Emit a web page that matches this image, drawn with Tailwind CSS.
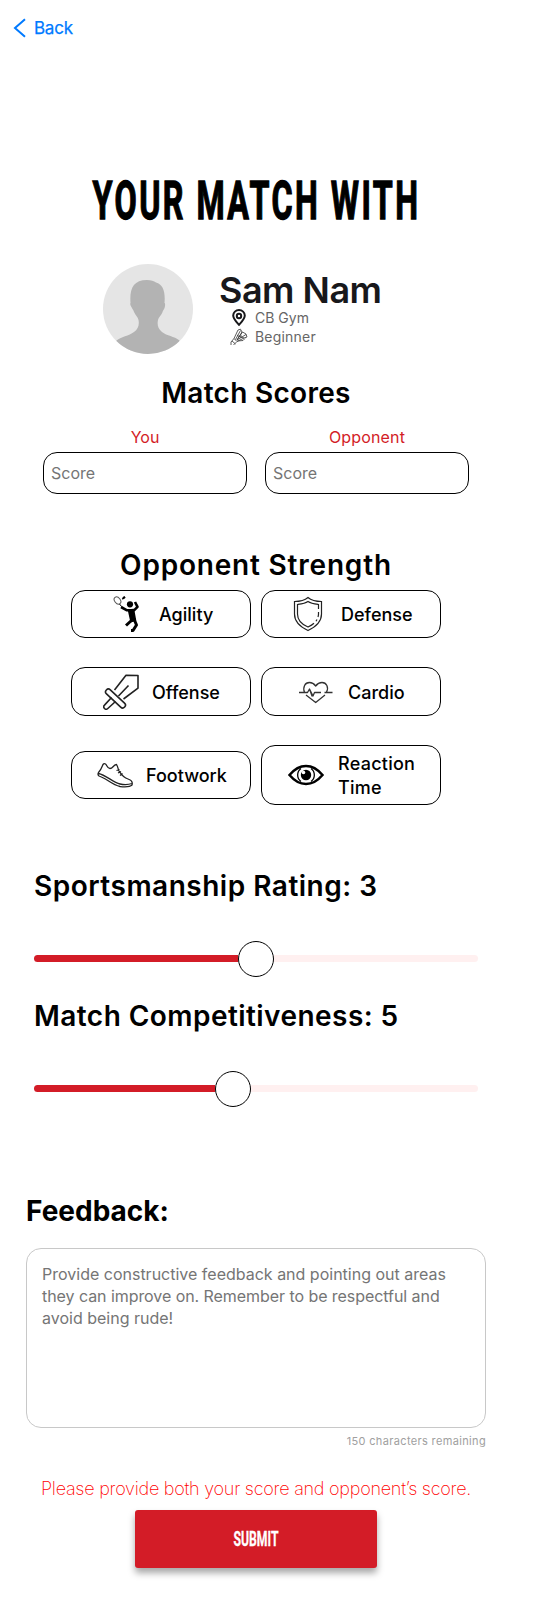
<!DOCTYPE html>
<html lang="en">
<head>
<meta charset="utf-8">
<title>Your Match</title>
<script src="https://cdn.jsdelivr.net/npm/@tailwindcss/browser@4"></script>
</head>
<body class="bg-white text-black font-['Inter',sans-serif]">
<main class="w-[542px] h-[1616px] overflow-hidden">
  <nav class="h-[56px] pl-[13px] flex items-center gap-[8px] text-[#007aff]">
    <svg class="w-[13px] h-[20px]" viewBox="0 0 13 20" fill="none" stroke="currentColor" stroke-width="2"><path d="M12 1.3 2 10l10 8.7"/></svg>
    <span class="text-[17px] leading-[20px] tracking-[-0.25px] [-webkit-text-stroke:0.25px_#007aff]">Back</span>
  </nav>
  <div class="w-[512px] flex flex-col">
    <h1 class="mt-[109px] h-[76px]" aria-label="Your match with">
      <svg class="w-[512px] h-[76px]" viewBox="0 0 512 76"><text x="92.500" y="54" textLength="328" lengthAdjust="spacingAndGlyphs" font-family="Roboto" font-weight="700" font-size="53" letter-spacing="4" stroke="#000" stroke-width="1.300">YOUR MATCH WITH</text></svg>
    </h1>
    <section class="mt-[23px] ml-[103px] h-[90px] flex">
      <svg class="w-[90px] h-[90px] rounded-full bg-[#e5e5e5]" viewBox="0 0 90 90" fill="#b3b3b3"><path d="M27.500 39C26.500 25 30 16 44 16c4 0 7 1 9 2.500 7 2 9.500 9 8.500 20.500 1 0 .7 4-.4 6-1 1.500-1.300 2-1.500 3-1.200 3.500-4.100 5-4.600 8-1 5 0 9 4 12 5 4 12 4 17.500 8.500V95H13V77c5-4.500 13-5 18-9 4-3 5.500-7 4.500-12-.5-3-3-4.500-4.500-8-.3-1-.7-2-1.500-3-1.300-2-3-5-2-6Z"/></svg>
      <div class="ml-[26px] pt-[4px] flex flex-col">
        <h2 class="text-[36px] leading-[44px] font-semibold tracking-[-0.5px] text-[#18181b]">Sam Nam</h2>
        <div class="flex h-[19px] items-center text-[#666] mt-[-4px]">
          <svg class="w-[14px] h-[17px] ml-[13px]" viewBox="0 0 14 17" fill="none" stroke="#18181b" stroke-width="2"><path d="M7 15.800C4 12.500 1.200 9.800 1.200 6.500a5.800 5.500 0 0 1 11.600 0C12.800 9.800 10 12.500 7 15.800Z"/><circle cx="7" cy="7" r="2.200"/></svg>
          <span class="ml-[9px] text-[14px] leading-[19px]">CB Gym</span>
        </div>
        <div class="flex h-[19px] items-center text-[#666]">
          <svg class="w-[18px] h-[18px] ml-[11px]" viewBox="0 0 18 18" fill="none" stroke="#333" stroke-width=".8"><path d="M1 17v-3l3-3.500 3 3L3.500 17M4 10.500 8 2l2.500-.8L12 4l-5 8M5.500 11.500l5-9M7 13.500l7-3.500 3-1-1-3-3.500-2L7 12l9-5.500M10 9l4 1M7 7l2 1.500 3-.5M7.500 13 13 12.500l2-2M2 13l3.500 3"/></svg>
          <span class="ml-[7px] text-[14px] leading-[19px] tracking-[0.2px]">Beginner</span>
        </div>
      </div>
    </section>
    <h2 class="mt-[22px] text-center text-[28px] leading-[34px] font-semibold tracking-[0.3px]">Match Scores</h2>
    <section class="mt-[15px] ml-[43px] flex gap-[18px]">
      <label class="w-[204px] flex flex-col"><span class="text-center text-[16px] leading-[24px] text-[#d31c27] h-[27px]">You</span>
        <input class="w-full h-[42px] border border-black rounded-[14px] px-[7px] text-[16px] placeholder:text-[#757575]" placeholder="Score"></label>
      <label class="w-[204px] flex flex-col"><span class="text-center text-[16px] leading-[24px] tracking-[0.15px] text-[#d31c27] h-[27px]">Opponent</span>
        <input class="w-full h-[42px] border border-black rounded-[14px] px-[7px] text-[16px] placeholder:text-[#757575]" placeholder="Score"></label>
    </section>
    <h2 class="mt-[54px] text-center text-[28px] leading-[34px] font-semibold tracking-[0.8px]">Opponent Strength</h2>
    <section class="mt-[8px] ml-[71px] flex flex-col text-[18px] leading-[24px] font-medium">
      <div class="flex gap-[10px]">
        <button class="w-[180px] h-[48px] border border-black rounded-[14px] flex items-center pl-[39px]">
          <svg class="w-[36px] h-[36px]" viewBox="0 0 36 36" fill="none" stroke="#000" stroke-linejoin="round"><ellipse cx="6.500" cy="4.500" rx="2.800" ry="4" transform="rotate(-38 6.500 4.500)" stroke="#555" stroke-width="1"/><path d="m8.500 8 2 2.500" stroke-width="1"/><path d="m12 2.300 2-1.500M11.500 2l1 .8" stroke-width="2.200"/><circle cx="19" cy="8.300" r="3.100" fill="#000" stroke="none"/><path d="m10 11 6 3.300h7l3.500-3.500L24 6" stroke-width="2.600"/><path d="m17.500 14 5-.5 2 11-4.500 1Z" fill="#000" stroke-width="1.500"/><path d="m21 24-6 5.500M23 23l2.500 6-3.500 5.500h-2" stroke-width="3"/></svg>
          <span class="ml-[12px] pt-[2px]">Agility</span>
        </button>
        <button class="w-[180px] h-[48px] border border-black rounded-[14px] flex items-center pl-[31px]">
          <svg class="w-[30px] h-[36px]" viewBox="0 0 30 36" fill="none" stroke="#222" stroke-width="1.200"><path d="M15 1.500C11 5 6 5.500 1.500 5.500V18c0 8 6 13 13.500 16.500C22.500 31 28.500 26 28.500 18V5.500C24 5.500 19 5 15 1.500Z"/><path d="M25.500 13V8.500C22 8 18 7.500 15 5.500 12 7.500 8 8 4.500 8.500V18c0 6.500 4.500 10.500 10.500 13 2-1 4-2 6-3.800M25.500 16v2c0 1-.2 2-.5 3M24 23.500l-1 1.800" /></svg>
          <span class="ml-[18px] pt-[2px]">Defense</span>
        </button>
      </div>
      <div class="mt-[29px] flex gap-[10px]">
        <button class="w-[180px] h-[49px] border border-black rounded-[14px] flex items-center pl-[31px]">
          <svg class="w-[36px] h-[36px]" viewBox="0 0 36 36" fill="none" stroke="#222" stroke-width="1.600" stroke-linejoin="round"><path d="M11.500 16 23 1.200l12 .3v12.700L20.500 25M25.500 11.500 15.500 22"/><rect x="-12.500" y="-2.800" width="25" height="5.600" rx="2.800" transform="translate(12.500 24.500) rotate(43)"/><path d="m8.500 23.500-7 7.600a2.300 2.300 0 0 0 3.300 3.400l7.700-7"/></svg>
          <span class="ml-[13px] pt-[2px]">Offense</span>
        </button>
        <button class="w-[180px] h-[49px] border border-black rounded-[14px] flex items-center pl-[36px]">
          <svg class="w-[36px] h-[24px]" viewBox="0 0 36 24" fill="none" stroke="#333" stroke-width="1.300" stroke-linejoin="round"><path d="M1 12.500h8.500l2-3.500L14 16l-2.500-7M11.500 9 15 16l1.500-3.500H23M26.500 12.500H34.500M6.500 12.500C4.500 7 7 2.500 11.500 2.500c3 0 4.500 1.200 6.200 3.500 1.700-2.300 3.300-3.500 6.300-3.500 4.500 0 7 5 4.500 9.500M8 15l9.700 7.500L27 15"/></svg>
          <span class="ml-[14px] pt-[2px]">Cardio</span>
        </button>
      </div>
      <div class="mt-[29px] flex gap-[10px] items-center">
        <button class="w-[180px] h-[48px] border border-black rounded-[14px] flex items-center pl-[25px]">
          <svg class="w-[36px] h-[26px]" viewBox="0 0 36 26" fill="none" stroke="#222" stroke-width="1.300" stroke-linejoin="round"><path d="M6 2.500C5 5 4 8 1.500 10.500c-.8 1.500-.8 2.500.5 3.500C9 16 15 23 23 24.500c5 .5 9.500 1 12-1.500 1-3-1-5-4-6-5-1.500-7-5-9-8C21 7 21 5 19.500 2.500 16 3 16 6.500 13 6.500S10 3 8.500 2C7.500 1.500 6.500 1.800 6 2.500ZM1.500 11.500C9 13 16 20.500 23 22c5 1 9 .5 12-.5M19.500 8.500l3-1M21 11l3-1.500M23 13.500l2.500-2"/></svg>
          <span class="ml-[13px] pt-[2px]">Footwork</span>
        </button>
        <button class="w-[180px] h-[60px] border border-black rounded-[14px] flex items-center pl-[26px]">
          <svg class="w-[36px] h-[22px]" viewBox="0 0 36 22" fill="none" stroke="#000"><path d="M1.500 11Q9 2 18 2t16.500 9Q27 20 18 20T1.500 11Z" stroke-width="2.500"/><path d="M13 4.500a8 8 0 0 0 0 13M23 4.500a8 8 0 0 1 0 13" stroke-width="1.300"/><circle cx="18" cy="11" r="5.200" fill="#000" stroke="none"/><circle cx="15.500" cy="8.500" r="1.800" fill="#fff" stroke="none"/></svg>
          <span class="ml-[14px] pt-[2px] text-left tracking-[0.25px]">Reaction<br>Time</span>
        </button>
      </div>
    </section>
    <section class="mt-[64px] ml-[34px] w-[444px]">
      <h2 class="text-[28px] leading-[34px] font-semibold tracking-[0.5px] whitespace-nowrap">Sportsmanship Rating: 3</h2>
      <div class="mt-[37px] h-[37px] flex items-center">
        <div class="w-[204px] h-[7px] bg-[#d31c27] rounded-l-full"></div>
        <div class="w-[36px] h-[36px] border border-black rounded-full bg-white"></div>
        <div class="flex-1 h-[7px] bg-[#fff0f0] rounded-r-full"></div>
      </div>
      <h2 class="mt-[22px] text-[28px] leading-[34px] font-semibold tracking-[0.45px] whitespace-nowrap">Match Competitiveness: 5</h2>
      <div class="mt-[37px] h-[37px] flex items-center">
        <div class="w-[181px] h-[7px] bg-[#d31c27] rounded-l-full"></div>
        <div class="w-[36px] h-[36px] border border-black rounded-full bg-white"></div>
        <div class="flex-1 h-[7px] bg-[#fff0f0] rounded-r-full"></div>
      </div>
    </section>
    <section class="mt-[87px] ml-[26px] w-[460px] flex flex-col">
      <h2 class="text-[28px] leading-[34px] font-bold tracking-[0px]">Feedback:</h2>
      <div class="mt-[20px] h-[180px] border border-[#c8c8c8] rounded-[15px] pt-[14px] pl-[15px] text-[16px] leading-[22px] text-[#757575] whitespace-nowrap">Provide constructive feedback and pointing out areas<br><span class="tracking-[-0.06px]">they can improve on. Remember to be respectful and</span><br>avoid being rude!</div>
      <p class="mt-[5px] text-right text-[11px] leading-[16px] tracking-[0.35px] text-[#a0a0a0]">150 characters remaining</p>
    </section>
    <p class="mt-[28px] text-center text-[18px] leading-[24px] tracking-[-0.25px] font-extralight text-[#ff0000] whitespace-nowrap">Please provide both your score and opponent’s score.</p>
    <button class="mt-[9px] ml-[135px] w-[242px] h-[58px] rounded-[3px] bg-[#d31c27] shadow-[0_5px_7px_rgba(0,0,0,0.35)]" aria-label="Submit">
      <svg class="w-[242px] h-[58px]" viewBox="0 0 242 58"><text x="98.500" y="35.500" textLength="45" lengthAdjust="spacingAndGlyphs" font-family="Roboto" font-weight="700" font-size="20" fill="#fff" stroke="#fff" stroke-width=".3">SUBMIT</text></svg>
    </button>
  </div>
</main>
</body>
</html>
